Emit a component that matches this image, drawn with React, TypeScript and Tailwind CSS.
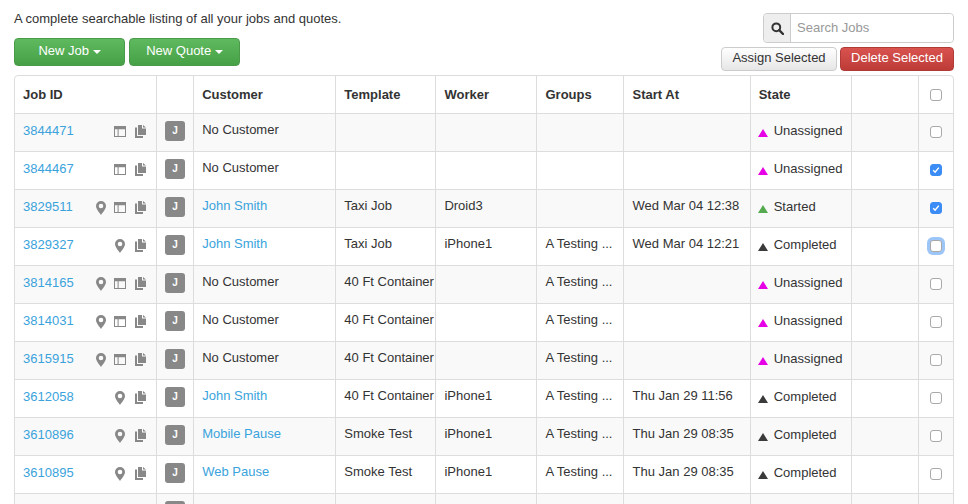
const font = "font-['Helvetica_Neue','Liberation_Sans',Arial,sans-serif]";

type Job = {
  id: string;
  pin?: boolean;
  layout?: boolean;
  customer: string;
  customerLink?: boolean;
  template?: string;
  worker?: string;
  groups?: string;
  startAt?: string;
  state?: "Unassigned" | "Started" | "Completed";
  checked?: boolean;
  focused?: boolean;
};

const jobs: Job[] = [
  { id: "3844471", layout: true, customer: "No Customer", state: "Unassigned" },
  { id: "3844467", layout: true, customer: "No Customer", state: "Unassigned", checked: true },
  { id: "3829511", pin: true, layout: true, customer: "John Smith", customerLink: true, template: "Taxi Job", worker: "Droid3", startAt: "Wed Mar 04 12:38", state: "Started", checked: true },
  { id: "3829327", pin: true, customer: "John Smith", customerLink: true, template: "Taxi Job", worker: "iPhone1", groups: "A Testing ...", startAt: "Wed Mar 04 12:21", state: "Completed", focused: true },
  { id: "3814165", pin: true, layout: true, customer: "No Customer", template: "40 Ft Container", groups: "A Testing ...", state: "Unassigned" },
  { id: "3814031", pin: true, layout: true, customer: "No Customer", template: "40 Ft Container", groups: "A Testing ...", state: "Unassigned" },
  { id: "3615915", pin: true, layout: true, customer: "No Customer", template: "40 Ft Container", groups: "A Testing ...", state: "Unassigned" },
  { id: "3612058", pin: true, customer: "John Smith", customerLink: true, template: "40 Ft Container", worker: "iPhone1", groups: "A Testing ...", startAt: "Thu Jan 29 11:56", state: "Completed" },
  { id: "3610896", pin: true, customer: "Mobile Pause", customerLink: true, template: "Smoke Test", worker: "iPhone1", groups: "A Testing ...", startAt: "Thu Jan 29 08:35", state: "Completed" },
  { id: "3610895", pin: true, customer: "Web Pause", customerLink: true, template: "Smoke Test", worker: "iPhone1", groups: "A Testing ...", startAt: "Thu Jan 29 08:35", state: "Completed" },
  { id: "", customer: "" },
];

function PinIcon() {
  return (
    <svg width="10" height="14" viewBox="0 0 10 14" className="text-[#888]">
      <path
        fill="currentColor"
        fillRule="evenodd"
        d="M5 0a5 5 0 0 1 5 5c0 3-3.4 6.6-5 9C3.4 11.6 0 8 0 5a5 5 0 0 1 5-5Zm0 2.7a2.3 2.3 0 1 0 0 4.6 2.3 2.3 0 0 0 0-4.6Z"
      />
    </svg>
  );
}

function LayoutIcon() {
  return (
    <svg width="12" height="11" viewBox="0 0 12 11" className="text-[#888]">
      <path
        fill="currentColor"
        fillRule="evenodd"
        d="M0 0h12v11H0V0Zm1 3.2V10h2.6V3.2H1Zm3.6 0V10H11V3.2H4.6Z"
      />
    </svg>
  );
}

function CopyIcon() {
  return (
    <svg width="11" height="13" viewBox="0 0 11 13" className="text-[#888]">
      <path fill="currentColor" d="M3 0h4v3.5h4V10H3V0Zm5 0 3 2.6H8V0Z" />
      <path fill="currentColor" d="M0 2.5h2V11h6v2H0V2.5Z" />
    </svg>
  );
}

function Caret() {
  return <span className="inline-block border-x-4 border-t-4 border-x-transparent border-t-white align-middle" />;
}

function Checkbox({ checked, focused }: { checked?: boolean; focused?: boolean }) {
  return (
    <span
      className={
        "relative mx-auto flex h-3 w-3 items-center justify-center rounded-[3px] border " +
        (checked
          ? "border-[#3b8df5] bg-[#3b8df5] "
          : "border-[#a9a9a9] bg-white ") +
        (focused ? "shadow-[0_0_0_3px_#9cc6f7] border-[#6aa5ee] " : "")
      }
    >
      <input type="checkbox" readOnly checked={!!checked} className="absolute inset-0 appearance-none" />
      {checked && (
        <svg width="8" height="8" viewBox="0 0 8 8">
          <path d="M1.2 4.3 3.1 6.2 6.8 1.6" fill="none" stroke="white" strokeWidth="1.5" />
        </svg>
      )}
    </span>
  );
}

function StateCell({ state }: { state?: Job["state"] }) {
  if (!state) return null;
  const color =
    state === "Unassigned"
      ? "border-b-[#e600e6]"
      : state === "Started"
        ? "border-b-[#55aa4f]"
        : "border-b-[#3a3a3a]";
  return (
    <div className="-ml-px flex items-center gap-[6px]">
      <span className={"inline-block border-x-[5px] border-b-[8px] border-x-transparent " + color} />
      <span className="-mt-[4px]">{state}</span>
    </div>
  );
}

const th = "border border-[#ddd] px-2 py-0 text-left text-[13px] font-bold text-[#333]";
const td = "border border-[#ddd] px-2 py-0 align-middle whitespace-nowrap overflow-hidden";

export default function App() {
  return (
    <div className={"h-screen overflow-hidden bg-white px-[14px] text-[13px] leading-[18px] text-[#333] " + font}>
      <div className="flex items-start justify-between">
        <div>
          <p className="pt-[10px]">A complete searchable listing of all your jobs and quotes.</p>
          <div className="mt-[10px] flex gap-1">
            <button className="h-7 w-[111px] rounded border border-[#4a9a4a] bg-gradient-to-b from-[#5fba5f] to-[#46a046] pb-[2px] text-white">
              New Job <Caret />
            </button>
            <button className="h-7 w-[111px] rounded border border-[#4a9a4a] bg-gradient-to-b from-[#5fba5f] to-[#46a046] pb-[2px] text-white">
              New Quote <Caret />
            </button>
          </div>
        </div>
        <div className="flex flex-col items-end pt-[13px]">
          <div className="flex h-[30px] w-[191px] rounded border border-[#ccc]">
            <span className="flex w-[27px] items-center justify-center rounded-l border-r border-[#ccc] bg-[#eee]">
              <svg width="13" height="13" viewBox="0 0 13 13">
                <circle cx="5.3" cy="5.3" r="3.9" fill="none" stroke="#333" strokeWidth="2" />
                <path d="M8.2 8.2 12 12" stroke="#333" strokeWidth="2.4" strokeLinecap="round" />
              </svg>
            </span>
            <input
              placeholder="Search Jobs"
              className="min-w-0 flex-1 rounded-r bg-white px-[6px] text-[13px] outline-none placeholder:text-[#999]"
            />
          </div>
          <div className="mt-1 flex gap-[3px]">
            <button className="h-6 w-[116px] rounded border border-[#ccc] bg-gradient-to-b from-white to-[#e6e6e6] pb-[2px] text-[#333]">
              Assign Selected
            </button>
            <button className="h-6 w-[114px] rounded border border-[#b03a36] bg-gradient-to-b from-[#d9534f] to-[#bd3b37] pb-[2px] text-white">
              Delete Selected
            </button>
          </div>
        </div>
      </div>

      <div className="mt-[4px] overflow-hidden rounded border border-[#ddd]">
        <table className="-m-px w-[941px] max-w-none table-fixed border-collapse">
          <colgroup>
            <col className="w-[142px]" />
            <col className="w-[37px]" />
            <col className="w-[142px]" />
            <col className="w-[100px]" />
            <col className="w-[100px]" />
            <col className="w-[87px]" />
            <col className="w-[127px]" />
            <col className="w-[101px]" />
            <col className="w-[67px]" />
            <col className="w-[36px]" />
          </colgroup>
          <thead>
            <tr className="h-[38px]">
              <th className={th}>Job ID</th>
              <th className={th} />
              <th className={th}>Customer</th>
              <th className={th}>Template</th>
              <th className={th}>Worker</th>
              <th className={th}>
                <div className="pl-px">Groups</div>
              </th>
              <th className={th}>
                <div className="pl-px">Start At</div>
              </th>
              <th className={th}>State</th>
              <th className={th} />
              <th className={th}>
                <Checkbox />
              </th>
            </tr>
          </thead>
          <tbody>
            {jobs.map((job, i) => (
              <tr key={i} className={"h-[38px] " + (i % 2 === 0 ? "bg-[#f9f9f9]" : "bg-white")}>
                <td className={td}>
                  <div className="flex items-center justify-between">
                    <a className="-mt-[4px] text-[#3aa3dc]">{job.id}</a>
                    {job.id && (
                      <div className="-mt-[2px] flex items-center gap-[8px] pr-[2px]">
                        {job.pin && <PinIcon />}
                        {job.layout && <LayoutIcon />}
                        <span className={job.layout ? "ml-px" : "ml-[2px]"}>
                          <CopyIcon />
                        </span>
                      </div>
                    )}
                  </div>
                </td>
                <td className={td}>
                  <span className="-mt-[4px] flex h-5 w-5 items-center justify-center rounded-[3px] bg-[#888] text-[10px] font-bold text-white">
                    {job.id && "J"}
                  </span>
                </td>
                <td className={td}>
                  <div className="-mt-[6px]">
                    {job.customerLink ? <a className="text-[#3aa3dc]">{job.customer}</a> : job.customer}
                  </div>
                </td>
                <td className={td}>
                  <div className="-mt-[6px]">{job.template}</div>
                </td>
                <td className={td}>
                  <div className="-mt-[6px]">{job.worker}</div>
                </td>
                <td className={td}>
                  <div className="-mt-[6px] pl-px">{job.groups}</div>
                </td>
                <td className={td}>
                  <div className="-mt-[6px] pl-px">{job.startAt}</div>
                </td>
                <td className={td}>
                  <StateCell state={job.state} />
                </td>
                <td className={td} />
                <td className={td}>
                  {job.id && (
                    <div className="-mt-[2px]">
                      <Checkbox checked={job.checked} focused={job.focused} />
                    </div>
                  )}
                </td>
              </tr>
            ))}
          </tbody>
        </table>
      </div>
    </div>
  );
}
